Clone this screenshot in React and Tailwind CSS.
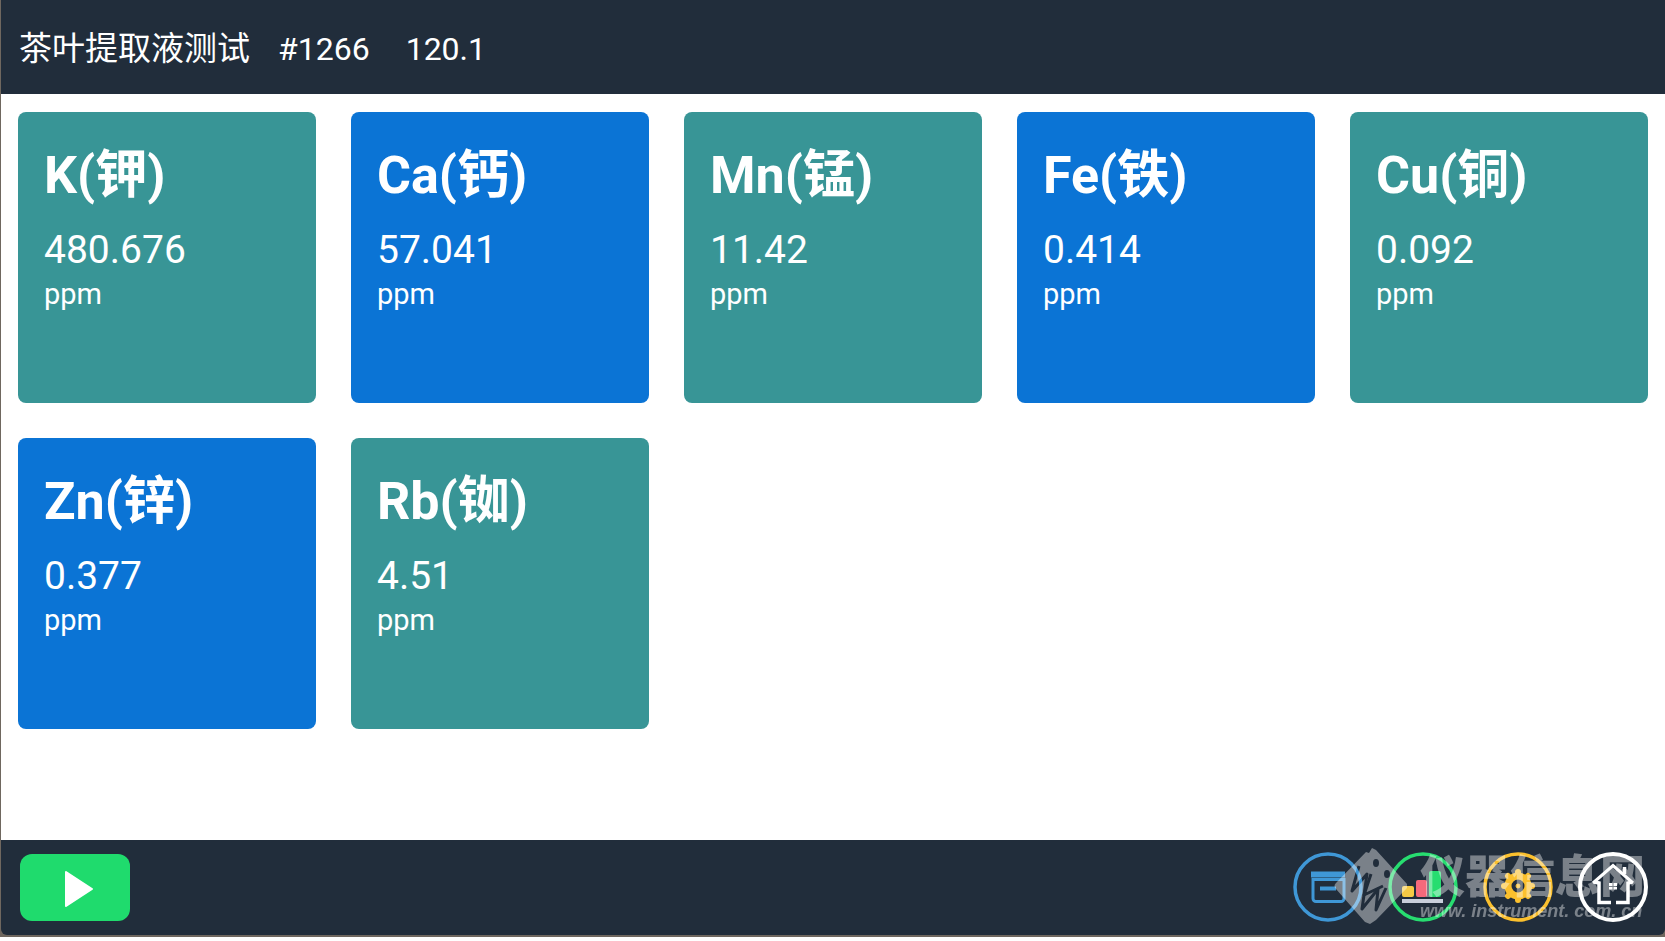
import React from 'react'

const header = {
  name: '茶叶提取液测试',
  id: '#1266',
  time: '120.1',
}

const elements = [
  { symbol: 'K', name: '钾', value: '480.676', unit: 'ppm' },
  { symbol: 'Ca', name: '钙', value: '57.041', unit: 'ppm' },
  { symbol: 'Mn', name: '锰', value: '11.42', unit: 'ppm' },
  { symbol: 'Fe', name: '铁', value: '0.414', unit: 'ppm' },
  { symbol: 'Cu', name: '铜', value: '0.092', unit: 'ppm' },
  { symbol: 'Zn', name: '锌', value: '0.377', unit: 'ppm' },
  { symbol: 'Rb', name: '铷', value: '4.51', unit: 'ppm' },
]

const ElementCard = ({ element, color }) => (
  <div className={`h-[291px] rounded-lg px-[26px] pt-[30px] text-white ${color}`}>
    <h2 className="text-[52px] leading-[68px] font-bold">
      {element.symbol}({element.name})
    </h2>
    <p className="mt-4 text-[39px] leading-[48px]">{element.value}</p>
    <p className="text-[29px] leading-[40px]">{element.unit}</p>
  </div>
)

const RecordsIcon = () => (
  <svg viewBox="0 0 70 70" className="size-full" fill="none" stroke="#3f97d6">
    <circle cx="35" cy="35" r="33" strokeWidth="3.5" />
    <path d="M18 19.500h34v6h-34z" fill="#3f97d6" stroke="none" />
    <path d="M20 27.500h31v19a3 3 0 0 1-3 3h-25a3 3 0 0 1-3-3z" strokeWidth="3" />
    <path d="M27 36.500h16" strokeWidth="4" />
  </svg>
)

const ChartIcon = () => (
  <svg viewBox="0 0 70 70" className="size-full">
    <circle cx="35" cy="35" r="33" fill="none" stroke="#27dd70" strokeWidth="3.5" />
    <rect x="14" y="34" width="12" height="11" rx="2" fill="#f6ca45" />
    <rect x="28" y="28" width="11" height="17" rx="2" fill="#f5697b" />
    <rect x="41" y="19" width="12" height="26" rx="2" fill="#27dd70" />
    <rect x="14" y="47" width="41" height="4" fill="#c9cfdb" />
  </svg>
)

const SettingsIcon = () => (
  <svg viewBox="0 0 70 70" className="size-full" fill="none" stroke="#fbc02d">
    <circle cx="35" cy="35" r="33" strokeWidth="3.5" />
    <circle cx="35" cy="34" r="10" strokeWidth="7" />
    <g strokeWidth="6" strokeLinecap="round">
      <path d="M35 23v-3M35 45v3M24 34h-3M46 34h3M27 26l-2-2M43 26l2-2M27 42l-2 2M43 42l2 2" />
    </g>
    <circle cx="35" cy="34" r="2" fill="#fbc02d" strokeWidth="1" />
  </svg>
)

const HomeIcon = () => (
  <svg viewBox="0 0 70 70" className="size-full" fill="none" stroke="#ffffff">
    <circle cx="35" cy="35" r="33" strokeWidth="4" />
    <path d="M15 31L35 13.500l20 17.500" strokeWidth="3" />
    <path d="M16 30l5 1v19.500h12M54 30l-4 1v19.500H38" strokeWidth="3.500" />
    <path d="M46.500 15v7" strokeWidth="3.500" />
    <path d="M31 31h3.500v3h-3.500zM35.500 31h3.500v3h-3.500zM31 35h3.500v2.500h-3.500zM35.500 35h3.500v2.500h-3.500z" fill="#ffffff" stroke="none" />
  </svg>
)

const actions = [
  { label: 'Records', Icon: RecordsIcon },
  { label: 'Chart', Icon: ChartIcon },
  { label: 'Settings', Icon: SettingsIcon },
  { label: 'Home', Icon: HomeIcon },
]

// Site stamp laid over the toolbar
const Watermark = () => (
  <div className="pointer-events-none absolute top-2 right-5 flex items-start gap-3 text-white opacity-40">
    <svg viewBox="0 0 74 76" className="h-[76px] w-[74px]">
      <mask id="stamp">
        <rect width="74" height="76" fill="white" />
        <g fill="black">
          <ellipse cx="42" cy="15" rx="3" ry="4" />
          <ellipse cx="53" cy="26" rx="3" ry="4" />
        </g>
        <g fill="none" stroke="black" strokeWidth="3" strokeLinejoin="round">
          <path d="M25 18L18 43l15-17-5 35 16-20-2 21 10-22" />
          <path d="M37 26l-7 21 19-9" />
        </g>
      </mask>
      <path
        fill="currentColor"
        mask="url(#stamp)"
        d="M32 4l3 1 3-5 4 2 31 34v4L42 72l-6 4-5-2L2 41c-2-2-2-4 0-6z"
      />
    </svg>
    <div className="pt-1">
      <p className="text-[45px] leading-[52px] font-black font-['Liberation_Sans','Noto_Sans_CJK_SC',sans-serif]">仪器信息网</p>
      <p className="font-['Liberation_Sans',sans-serif] text-[18px] leading-[14px] font-bold italic">www. instrument. com. cn</p>
    </div>
  </div>
)

const App = () => {
  return (
    <div className="flex min-h-screen flex-col bg-white pb-1 font-['Roboto','Noto_Sans_CJK_SC',sans-serif]">
      <div className="flex flex-1 flex-col border-b-2 border-[#6f675f] bg-[#6f675f] pl-px">
        {/* Header */}
        <header className="flex h-[94px] items-center bg-[#212d3b] pt-[3px] pl-[18px] text-[32px] text-white">
          <h1 className="text-[33px]">{header.name}</h1>
          <span className="ml-7">{header.id}</span>
          <span className="ml-9">{header.time}</span>
        </header>

        {/* Results */}
        <main className="flex-1 bg-white py-[18px] pr-[17px] pl-[17px]">
          <div className="grid grid-cols-5 gap-[35px]">
            {elements.map((element, index) => (
              <ElementCard
                key={element.symbol}
                element={element}
                color={index % 2 === 0 ? 'bg-[#389596]' : 'bg-[#0b74d5]'}
              />
            ))}
          </div>
        </main>

        {/* Toolbar */}
        <footer className="relative flex h-[95px] items-center justify-between rounded-b-md bg-[#212d3b] pr-[17px] pb-px pl-[19px]">
          <button
            type="button"
            aria-label="Start"
            className="flex h-[67px] w-[110px] items-center justify-center rounded-xl bg-[#1fdb6d]"
          >
            <svg viewBox="0 0 30 38" className="mt-1 ml-2 h-[38px] w-[30px]">
              <path d="M2 2l26 17L2 36z" fill="#ffffff" stroke="#ffffff" strokeWidth="2" strokeLinejoin="round" />
            </svg>
          </button>
          <nav className="flex gap-[25px]">
            {actions.map(({ label, Icon }) => (
              <button key={label} type="button" aria-label={label} className="size-[70px]">
                <Icon />
              </button>
            ))}
          </nav>
          <Watermark />
        </footer>
      </div>
    </div>
  )
}

export default App
